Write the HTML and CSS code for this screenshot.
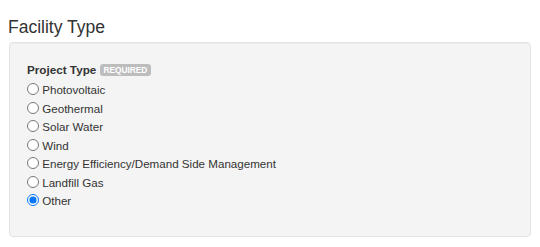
FILE: index.html
```html
<!DOCTYPE html>
<html>
<head>
<meta charset="utf-8">
<link rel="stylesheet" href="styles.css">
</head>
<body>
<div class="page">
  <h3 class="section-title">Facility Type</h3>
  <div class="well">
    <div class="field-label">Project Type <span class="badge">REQUIRED</span></div>
    <label class="option"><input type="radio" name="ptype"> Photovoltaic</label>
    <label class="option"><input type="radio" name="ptype"> Geothermal</label>
    <label class="option"><input type="radio" name="ptype"> Solar Water</label>
    <label class="option"><input type="radio" name="ptype"> Wind</label>
    <label class="option"><input type="radio" name="ptype"> Energy Efficiency/Demand Side Management</label>
    <label class="option"><input type="radio" name="ptype"> Landfill Gas</label>
    <label class="option"><input type="radio" name="ptype" checked> Other</label>
  </div>
</div>
</body>
</html>
```
FILE: styles.css
```css
html, body {
  margin: 0;
  padding: 0;
  background: #ffffff;
}
body {
  font-family: "Liberation Sans", Arial, sans-serif;
  color: #333333;
  font-size: 12px;
}
.page {
  padding: 17px 9px 0 8px;
}
.section-title {
  margin: 0 0 5px 0;
  font-size: 17.5px;
  line-height: 20px;
  font-weight: normal;
  color: #333333;
}
.well {
  margin-left: 1px;
  background: #f4f4f4;
  border: 1px solid #e3e3e3;
  border-radius: 4px;
  box-shadow: inset 0 1px 1px rgba(0,0,0,0.03);
  padding: 18px 17px 25px 17px;
}
.field-label {
  font-weight: bold;
  font-size: 11.7px;
  line-height: 17px;
  margin-bottom: 3px;
}
.badge {
  display: inline-block;
  vertical-align: 1px;
  background: #bdbdbd;
  color: #ffffff;
  font-size: 8.3px;
  font-weight: bold;
  line-height: 12px;
  padding: 0 4px;
  border-radius: 3px;
}
.option {
  display: block;
  font-size: 11.6px;
  line-height: 18.57px;
  white-space: nowrap;
}
.option input {
  margin: 0;
  width: 12px;
  height: 12px;
  vertical-align: -1px;
}
```
